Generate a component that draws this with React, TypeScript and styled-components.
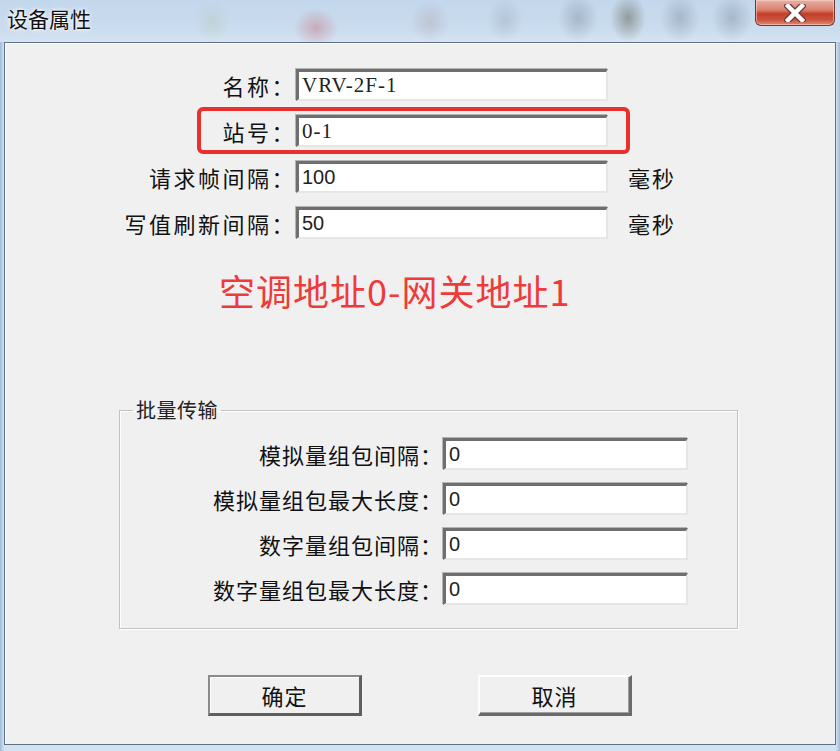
import React from "react";
import styled, { createGlobalStyle } from "styled-components";

const cjk = `"Noto Sans CJK SC", "Noto Sans", sans-serif`;

const GlobalStyle = createGlobalStyle`
  html, body {
    margin: 0;
    padding: 0;
  }
  body {
    width: 840px;
    height: 751px;
    overflow: hidden;
    background: #d6e4f2;
  }
`;

const Window = styled.div`
  width: 840px;
  height: 751px;
  box-sizing: border-box;
  display: flex;
  flex-direction: column;
  font-family: ${cjk};
  background: linear-gradient(
    90deg,
    #9fbad8 0px,
    #d3e2f1 4px,
    #d3e2f1 836px,
    #9fbad8 840px
  );
`;

// blurred desktop behind the aero glass
const TitleBar = styled.div`
  height: 42px;
  flex: none;
  display: flex;
  align-items: flex-start;
  justify-content: space-between;
  padding: 0 5px 0 7px;
  background:
    radial-gradient(ellipse 22px 20px at 316px 28px, rgba(200, 80, 90, 0.35), transparent),
    radial-gradient(ellipse 18px 22px at 212px 22px, rgba(160, 185, 140, 0.22), transparent),
    radial-gradient(ellipse 20px 22px at 430px 22px, rgba(150, 120, 120, 0.22), transparent),
    radial-gradient(ellipse 18px 22px at 505px 20px, rgba(120, 135, 150, 0.25), transparent),
    radial-gradient(ellipse 20px 24px at 578px 18px, rgba(90, 105, 120, 0.3), transparent),
    radial-gradient(ellipse 18px 24px at 628px 18px, rgba(80, 80, 60, 0.45), transparent),
    radial-gradient(ellipse 20px 24px at 680px 18px, rgba(90, 105, 120, 0.3), transparent),
    radial-gradient(ellipse 20px 24px at 732px 18px, rgba(90, 105, 120, 0.3), transparent),
    linear-gradient(180deg, #c3d7ec 0%, #cadcee 70%, #d6e4f3 100%);
`;

const Title = styled.div`
  font-size: 21px;
  line-height: 36px;
  color: #111;
  text-shadow: 0 0 6px #fff, 0 0 3px #fff;
`;

const CloseButton = styled.div`
  width: 80px;
  height: 26px;
  box-sizing: border-box;
  display: flex;
  align-items: center;
  justify-content: center;
  border: 1px solid #6e3a32;
  border-top: none;
  border-radius: 0 0 6px 6px;
  background: linear-gradient(
    180deg,
    #e9b2a6 0%,
    #d8806e 40%,
    #c33f28 55%,
    #cc5540 80%,
    #dc8a78 100%
  );
  box-shadow: inset 0 0 0 1px rgba(255, 220, 210, 0.5);
`;

const Client = styled.div`
  flex: 1;
  margin: 0 4px 6px 4px;
  border: 1px solid #5e7084;
  background: #f0f0f0;
  box-shadow: inset 1px 1px 0 #ffffff;
  display: flex;
  flex-direction: column;
  align-items: flex-start;
`;

const Form = styled.div<{ $top: number; $left: number; $label: number; $input: number; $gap: number }>`
  display: grid;
  grid-template-columns: ${({ $label, $input }) => `${$label}px ${$input}px auto`};
  grid-auto-rows: 32px;
  row-gap: ${({ $gap }) => $gap}px;
  column-gap: 8px;
  margin-top: ${({ $top }) => $top}px;
  margin-left: ${({ $left }) => $left}px;
  align-items: center;
`;

const Row = styled.div`
  display: contents;
`;

const Label = styled.label<{ $wide?: boolean }>`
  font-size: 22px;
  line-height: 32px;
  color: #111;
  text-align: right;
  white-space: nowrap;
  letter-spacing: ${({ $wide }) => ($wide ? "2.5px" : "1px")};
  margin-right: -8px;
  position: relative;
`;

// red annotation drawn over the station row
const Marker = styled.div`
  position: absolute;
  left: 109px;
  top: -8px;
  width: 433px;
  height: 47px;
  box-sizing: border-box;
  border: 4px solid #e8302c;
  border-radius: 6px;
  pointer-events: none;
`;

const TextBox = styled.div<{ $serif?: boolean }>`
  height: 32px;
  box-sizing: border-box;
  background: #fff;
  border-top: 3px solid #6f6f6f;
  border-left: 3px solid #6f6f6f;
  border-right: 2px solid #e6e6e6;
  border-bottom: 2px solid #e6e6e6;
  box-shadow: -1px -1px 0 #b4b4b4;
  padding-left: 3px;
  font-family: ${({ $serif }) =>
    $serif ? `"Liberation Serif", "DejaVu Serif", serif` : `"Liberation Sans", Arial, sans-serif`};
  font-size: ${({ $serif }) => ($serif ? "21px" : "20px")};
  letter-spacing: ${({ $serif }) => ($serif ? "1px" : "0")};
  line-height: 27px;
  color: #222;
`;

const Unit = styled.span`
  font-size: 22px;
  line-height: 32px;
  letter-spacing: 2px;
  color: #111;
  margin-left: 12px;
`;

const Notice = styled.div`
  margin-top: 29px;
  margin-left: 214px;
  font-size: 36px;
  line-height: 44px;
  letter-spacing: 1px;
  color: #ee3a3a;
`;

const Group = styled.fieldset`
  margin: 86px 0 0 114px;
  width: 619px;
  height: 231px;
  box-sizing: border-box;
  padding: 0;
  min-width: 0;
  border: 1px solid #c2c2c2;
  box-shadow: inset 1px 1px 0 #fff, 1px 1px 0 #fff;
`;

const Legend = styled.legend`
  margin-left: 13px;
  padding: 0 3px;
  font-size: 20px;
  line-height: 24px;
  letter-spacing: 0.5px;
  color: #222;
`;

const ButtonRow = styled.div`
  display: flex;
  gap: 116px;
  margin-top: 46px;
  margin-left: 203px;
`;

const Button = styled.button<{ $default?: boolean }>`
  width: 154px;
  height: 41px;
  box-sizing: border-box;
  padding: 0;
  background: #f0f0f0;
  font-family: ${cjk};
  font-size: 22px;
  letter-spacing: 1px;
  color: #111;
  border-style: solid;
  border-width: 2px 3px 3px 2px;
  border-color: ${({ $default }) =>
    $default ? "#8a8a8a #5f5f5f #5f5f5f #8a8a8a" : "#fdfdfd #6b6b6b #6b6b6b #fdfdfd"};
  box-shadow: ${({ $default }) =>
    $default ? "inset 1px 1px 0 #fff" : "inset -1px -1px 0 #a0a0a0"};
`;

const CloseIcon = () => (
  <svg width="22" height="18" viewBox="0 0 22 18">
    <path d="M4 2 L18 16 M18 2 L4 16" stroke="#6a3a34" strokeWidth="7" strokeLinecap="square" />
    <path d="M4 2 L18 16 M18 2 L4 16" stroke="#ffffff" strokeWidth="4.5" strokeLinecap="square" />
  </svg>
);

const mainRows = [
  { label: "名称：", value: "VRV-2F-1", serif: true },
  { label: "站号：", value: "0-1", serif: true, marked: true },
  { label: "请求帧间隔：", value: "100", unit: "毫秒" },
  { label: "写值刷新间隔：", value: "50", unit: "毫秒" },
];

const batchRows = [
  { label: "模拟量组包间隔：", value: "0" },
  { label: "模拟量组包最大长度：", value: "0" },
  { label: "数字量组包间隔：", value: "0" },
  { label: "数字量组包最大长度：", value: "0" },
];

export default function App() {
  return (
    <>
      <GlobalStyle />
      <Window>
        <TitleBar>
          <Title>设备属性</Title>
          <CloseButton>
            <CloseIcon />
          </CloseButton>
        </TitleBar>
        <Client>
          <Form $top={26} $left={83} $label={200} $input={312} $gap={14}>
            {mainRows.map((row) => (
              <Row key={row.label}>
                <Label $wide>
                  {row.marked && <Marker />}
                  {row.label}
                </Label>
                <TextBox $serif={row.serif}>{row.value}</TextBox>
                {row.unit ? <Unit>{row.unit}</Unit> : <span />}
              </Row>
            ))}
          </Form>
          <Notice>空调地址0-网关地址1</Notice>
          <Group>
            <Legend>批量传输</Legend>
            <Form $top={16} $left={0} $label={315} $input={245} $gap={13}>
              {batchRows.map((row) => (
                <Row key={row.label}>
                  <Label>{row.label}</Label>
                  <TextBox>{row.value}</TextBox>
                  <span />
                </Row>
              ))}
            </Form>
          </Group>
          <ButtonRow>
            <Button $default>确定</Button>
            <Button>取消</Button>
          </ButtonRow>
        </Client>
      </Window>
    </>
  );
}
